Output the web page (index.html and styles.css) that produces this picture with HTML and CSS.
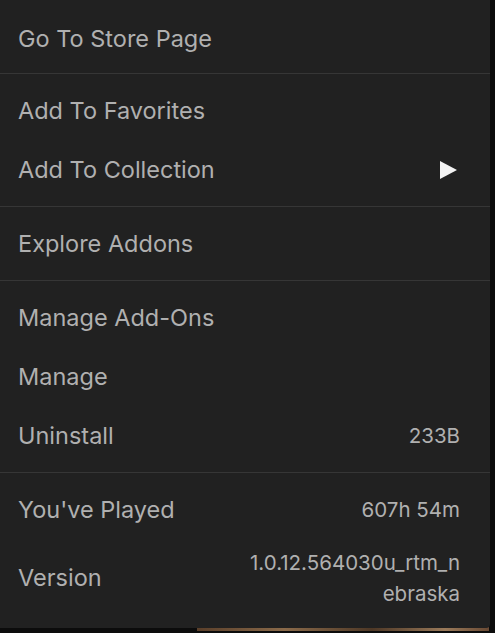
FILE: index.html
```html
<!DOCTYPE html>
<html lang="en">
    <head>
        <meta charset="UTF-8" />
        <title>Context menu</title>
        <link rel="stylesheet" href="styles.css">
    </head>
    <body>
        <div class="backdrop"></div>
        <div class="menu">
            <div class="group">
                <div class="item">Go To Store Page</div>
            </div>
            <div class="group">
                <div class="item">Add To Favorites</div>
                <div class="item">
                    <span>Add To Collection</span>
                    <svg class="arrow" width="17" height="18" viewBox="0 0 17 18">
                        <polygon points="0,0 17,9 0,18" fill="#f2f2f2" />
                    </svg>
                </div>
            </div>
            <div class="group">
                <div class="item">Explore Addons</div>
            </div>
            <div class="group">
                <div class="item">Manage Add-Ons</div>
                <div class="item">Manage</div>
                <div class="item">
                    <span>Uninstall</span>
                    <span class="value">233B</span>
                </div>
            </div>
            <div class="group">
                <div class="item">
                    <span>You've Played</span>
                    <span class="value">607h 54m</span>
                </div>
                <div class="item version">
                    <span>Version</span>
                    <span class="value wrap">1.0.12.564030u_rtm_nebraska</span>
                </div>
            </div>
        </div>
    </body>
</html>
```

FILE: styles.css
```css
body {
    margin: 0;
    background-color: #0c0c0c;
    font-family: Inter, "Noto Sans", sans-serif;
    position: relative;
    height: 633px;
    overflow: hidden;
}

/* 메뉴 뒤에 깔린 그림 조각 */
.backdrop {
    position: absolute;
    left: 197px;
    top: 600px;
    width: 292px;
    height: 31px;
    background: linear-gradient(90deg, #5a3f2a, #8a6a4a 30%, #4e3826 60%, #9a7a5a 85%, #6a4a34);
}

.menu {
    position: relative;
    width: 490px;
    background-color: #212121;
    border-radius: 0 0 4px 0;
    color: #b0b0b0;
    font-size: 23.5px;
}

.group {
    padding: 7px 0;
    border-bottom: 1px solid #363636;
}
.group:first-child {
    padding: 9px 0 5px;
}
.group:last-child {
    border-bottom: none;
    padding-bottom: 12px;
}

.item {
    display: flex;
    justify-content: space-between;
    align-items: center;
    height: 59px;
    padding: 0 30px 0 18px;
    box-sizing: border-box;
    line-height: 31px;
}

.arrow {
    margin-right: 3px;
}

.value {
    font-size: 20.5px;
    text-align: right;
}

.item.version {
    height: 77px;
}
.wrap {
    width: 216px;
    word-break: break-all;
}
```
